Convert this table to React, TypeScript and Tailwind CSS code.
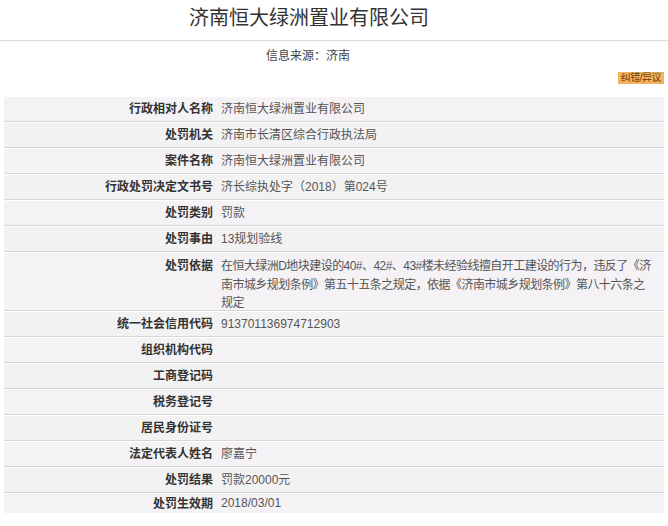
import React from 'react';

const rows: { label: string; value?: React.ReactNode; tall?: boolean }[] = [
  { label: '行政相对人名称', value: '济南恒大绿洲置业有限公司' },
  { label: '处罚机关', value: '济南市长清区综合行政执法局' },
  { label: '案件名称', value: '济南恒大绿洲置业有限公司' },
  { label: '行政处罚决定文书号', value: '济长综执处字（2018）第024号' },
  { label: '处罚类别', value: '罚款' },
  { label: '处罚事由', value: '13规划验线' },
  {
    label: '处罚依据',
    tall: true,
    value: (
      <>
        在恒大绿洲D地块建设的40#、42#、43#楼未经验线擅自开工建设的行为，违反了《济
        <br />
        南市城乡规划条例》第五十五条之规定，依据《济南市城乡规划条例》第八十六条之
        <br />
        规定
      </>
    ),
  },
  { label: '统一社会信用代码', value: '913701136974712903' },
  { label: '组织机构代码' },
  { label: '工商登记码' },
  { label: '税务登记号' },
  { label: '居民身份证号' },
  { label: '法定代表人姓名', value: '廖嘉宁' },
  { label: '处罚结果', value: '罚款20000元' },
  { label: '处罚生效期', value: '2018/03/01' },
];

export default function App() {
  return (
    <div className="w-[668px] h-[526px] overflow-hidden bg-white font-['Liberation_Sans','Noto_Sans_CJK_SC',sans-serif]">
      {/* header */}
      <div className="w-[618px] pt-[6px] text-center text-[20px] leading-[24px] text-[#333]">
        济南恒大绿洲置业有限公司
      </div>
      <div className="mt-[10px] h-px bg-[#dedede] shadow-[0_1px_2px_rgba(0,0,0,0.06)]" />
      <div className="w-[616px] mt-[7px] text-center text-[12px] leading-[16px] text-[#444]">
        信息来源：济南
      </div>

      <div className="flex justify-end pr-[4px] mt-[8px]">
        <span className="bg-[#f3b25e] text-[#7a3f0c] text-[10px] leading-[12px] px-[3px] whitespace-nowrap tracking-[-0.5px]">
          纠错/异议
        </span>
      </div>

      {/* detail table */}
      <div className="mx-[4px] mt-[12px] w-[660px]">
        {rows.map((r, i) => (
          <div
            key={r.label}
            className={
              'flex border-t border-white border-b border-b-[#d6d6d6] ' +
              (i % 2 === 0 ? 'bg-[#f4f2f5] ' : 'bg-[#f3f2f3] ') +
              (r.tall ? 'items-start h-[59px] pt-[4px]' : i === rows.length - 1 ? 'items-center h-[20px] border-b-0' : 'items-center h-[26px]')
            }
          >
            <div className="w-[209px] shrink-0 text-right text-[12px] leading-[18px] font-bold text-[#333]">
              {r.label}
            </div>
            <div
              className={
                'pl-[8px] text-[12px] leading-[18.5px] text-[#555] whitespace-nowrap' +
                (r.tall ? ' tracking-[-0.55px]' : '')
              }
            >
              {r.value}
            </div>
          </div>
        ))}
      </div>
    </div>
  );
}
